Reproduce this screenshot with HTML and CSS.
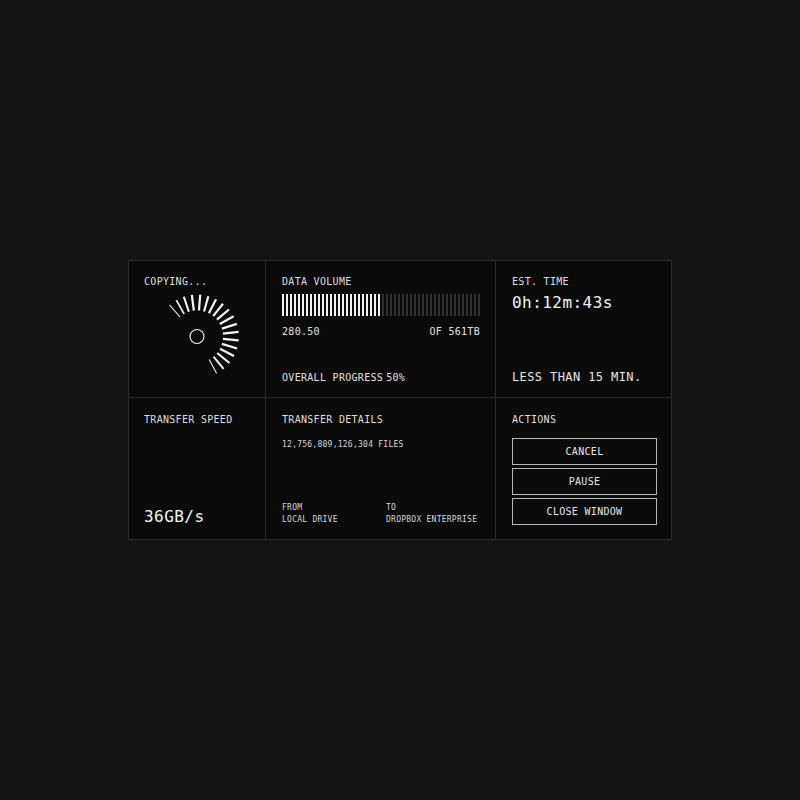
FILE: index.html
```html
<!DOCTYPE html>
<html lang="en">
<head>
<meta charset="utf-8">
<title>Copying</title>
<link rel="stylesheet" href="styles.css">
</head>
<body>
<main class="panel">
  <section class="cell cell-copy">
    <div class="label">COPYING...</div>
    <svg class="spinner" width="100" height="100" viewBox="0 0 100 100" aria-hidden="true">
      <g stroke="#f4f4f4" stroke-linecap="butt">
        <line x1="78" y1="50" x2="95" y2="50" stroke-width="1" transform="rotate(-131 50 50)"/>
        <line x1="78" y1="50" x2="95" y2="50" stroke-width="1.8" transform="rotate(-119.6 50 50)"/>
        <line x1="78" y1="50" x2="95" y2="50" stroke-width="2.2" transform="rotate(-108.3 50 50)"/>
        <line x1="78" y1="50" x2="95" y2="50" stroke-width="2.4" transform="rotate(-97 50 50)"/>
        <line x1="78" y1="50" x2="95" y2="50" stroke-width="2.4" transform="rotate(-85.6 50 50)"/>
        <line x1="78" y1="50" x2="95" y2="50" stroke-width="2.4" transform="rotate(-74.3 50 50)"/>
        <line x1="78" y1="50" x2="95" y2="50" stroke-width="2.4" transform="rotate(-62.9 50 50)"/>
        <line x1="78" y1="50" x2="95" y2="50" stroke-width="2.4" transform="rotate(-51.6 50 50)"/>
        <line x1="78" y1="50" x2="95" y2="50" stroke-width="2.4" transform="rotate(-40.2 50 50)"/>
        <line x1="78" y1="50" x2="95" y2="50" stroke-width="2.4" transform="rotate(-28.9 50 50)"/>
        <line x1="78" y1="50" x2="95" y2="50" stroke-width="2.4" transform="rotate(-17.5 50 50)"/>
        <line x1="78" y1="50" x2="95" y2="50" stroke-width="2.4" transform="rotate(-6.2 50 50)"/>
        <line x1="78" y1="50" x2="95" y2="50" stroke-width="2.4" transform="rotate(5.2 50 50)"/>
        <line x1="78" y1="50" x2="95" y2="50" stroke-width="2.4" transform="rotate(16.6 50 50)"/>
        <line x1="78" y1="50" x2="95" y2="50" stroke-width="2.4" transform="rotate(27.9 50 50)"/>
        <line x1="78" y1="50" x2="95" y2="50" stroke-width="2.3" transform="rotate(39.3 50 50)"/>
        <line x1="78" y1="50" x2="95" y2="50" stroke-width="2" transform="rotate(50.6 50 50)"/>
        <line x1="78" y1="50" x2="95" y2="50" stroke-width="1.1" transform="rotate(62 50 50)"/>
      </g>
      <circle cx="50" cy="50" r="7.5" fill="none" stroke="#f4f4f4" stroke-width="1.2"/>
    </svg>
  </section>

  <section class="cell cell-volume">
    <div class="label">DATA VOLUME</div>
    <div class="bar"><div class="bar-fill" style="width:100px"></div></div>
    <div class="bar-meta"><span>280.50</span><span>OF 561TB</span></div>
    <div class="progress"><span>OVERALL PROGRESS</span><span>50%</span></div>
  </section>

  <section class="cell cell-time">
    <div class="label">EST. TIME</div>
    <div class="big time">0h:12m:43s</div>
    <div class="note">LESS THAN 15 MIN.</div>
  </section>

  <section class="cell cell-speed row2">
    <div class="label">TRANSFER SPEED</div>
    <div class="big speed">36GB/s</div>
  </section>

  <section class="cell cell-details row2">
    <div class="label">TRANSFER DETAILS</div>
    <div class="small files">12,756,809,126,304 FILES</div>
    <div class="route">
      <div class="small">FROM<br>LOCAL DRIVE</div>
      <div class="small">TO<br>DROPBOX ENTERPRISE</div>
    </div>
  </section>

  <section class="cell cell-actions row2">
    <div class="label">ACTIONS</div>
    <div class="buttons">
      <button class="btn" type="button">CANCEL</button>
      <button class="btn" type="button">PAUSE</button>
      <button class="btn" type="button">CLOSE WINDOW</button>
    </div>
  </section>
</main>
</body>
</html>
```

FILE: styles.css
```css
* {
  box-sizing: border-box;
}

html, body {
  margin: 0;
  padding: 0;
}

body {
  background: #141414;
  min-height: 100vh;
  display: flex;
  align-items: center;
  justify-content: center;
  font-family: "DejaVu Sans Mono", "Liberation Mono", monospace;
  color: #e6e6e6;
}

.panel {
  display: grid;
  grid-template-columns: 136px 229px 175px;
  grid-template-rows: 136px 141px;
  gap: 1px;
  padding: 1px;
  background: #2a2a2a;
}

.cell {
  background: #0b0b0b;
  display: flex;
  flex-direction: column;
  padding: 16px 16px 14px 16px;
}

.cell-copy,
.cell-speed {
  padding-left: 15px;
}

.row2 {
  padding-top: 17px;
  padding-bottom: 14px;
}

.label {
  font-size: 10px;
  line-height: 10px;
  letter-spacing: 0.3px;
  color: #dedede;
  white-space: nowrap;
}

.spinner {
  display: block;
  align-self: center;
  margin-top: 3px;
}

.bar {
  margin-top: 7px;
  width: 198px;
  height: 22px;
  background: repeating-linear-gradient(90deg, #303030 0 2px, transparent 2px 4px);
}

.bar-fill {
  height: 100%;
  background: repeating-linear-gradient(90deg, #f4f4f4 0 2px, #0b0b0b 2px 4px);
}

.bar-meta {
  margin-top: 11px;
  width: 198px;
  display: flex;
  justify-content: space-between;
  font-size: 10px;
  line-height: 10px;
  letter-spacing: 0.3px;
  color: #e0e0e0;
}

.progress {
  margin-top: auto;
  display: flex;
  gap: 3px;
  font-size: 10px;
  line-height: 10px;
  letter-spacing: 0.3px;
  color: #e0e0e0;
  white-space: nowrap;
}

.big {
  font-size: 16px;
  line-height: 16px;
  letter-spacing: 0.45px;
  color: #f2f2f2;
  white-space: nowrap;
}

.time {
  margin-top: 8px;
}

.speed {
  margin-top: auto;
}

.note {
  margin-top: auto;
  font-size: 12px;
  line-height: 12px;
  letter-spacing: 0.4px;
  color: #e6e6e6;
  white-space: nowrap;
}

.small {
  font-size: 8px;
  line-height: 12px;
  letter-spacing: 0.25px;
  color: #d6d6d6;
  white-space: nowrap;
}

.files {
  margin-top: 16px;
  line-height: 8px;
}

.route {
  margin-top: auto;
  margin-bottom: -1px;
  display: grid;
  grid-template-columns: 104px 1fr;
}

.cell-actions {
  padding-right: 14px;
}

.buttons {
  margin-top: 13px;
  display: flex;
  flex-direction: column;
  gap: 3px;
}

.btn {
  display: block;
  width: 100%;
  height: 27px;
  margin: 0;
  padding: 0;
  background: transparent;
  border: 1px solid #b8b8b8;
  color: #e6e6e6;
  font-family: "DejaVu Sans Mono", "Liberation Mono", monospace;
  font-size: 10px;
  line-height: 10px;
  letter-spacing: 0.3px;
  text-align: center;
  cursor: pointer;
}
```
